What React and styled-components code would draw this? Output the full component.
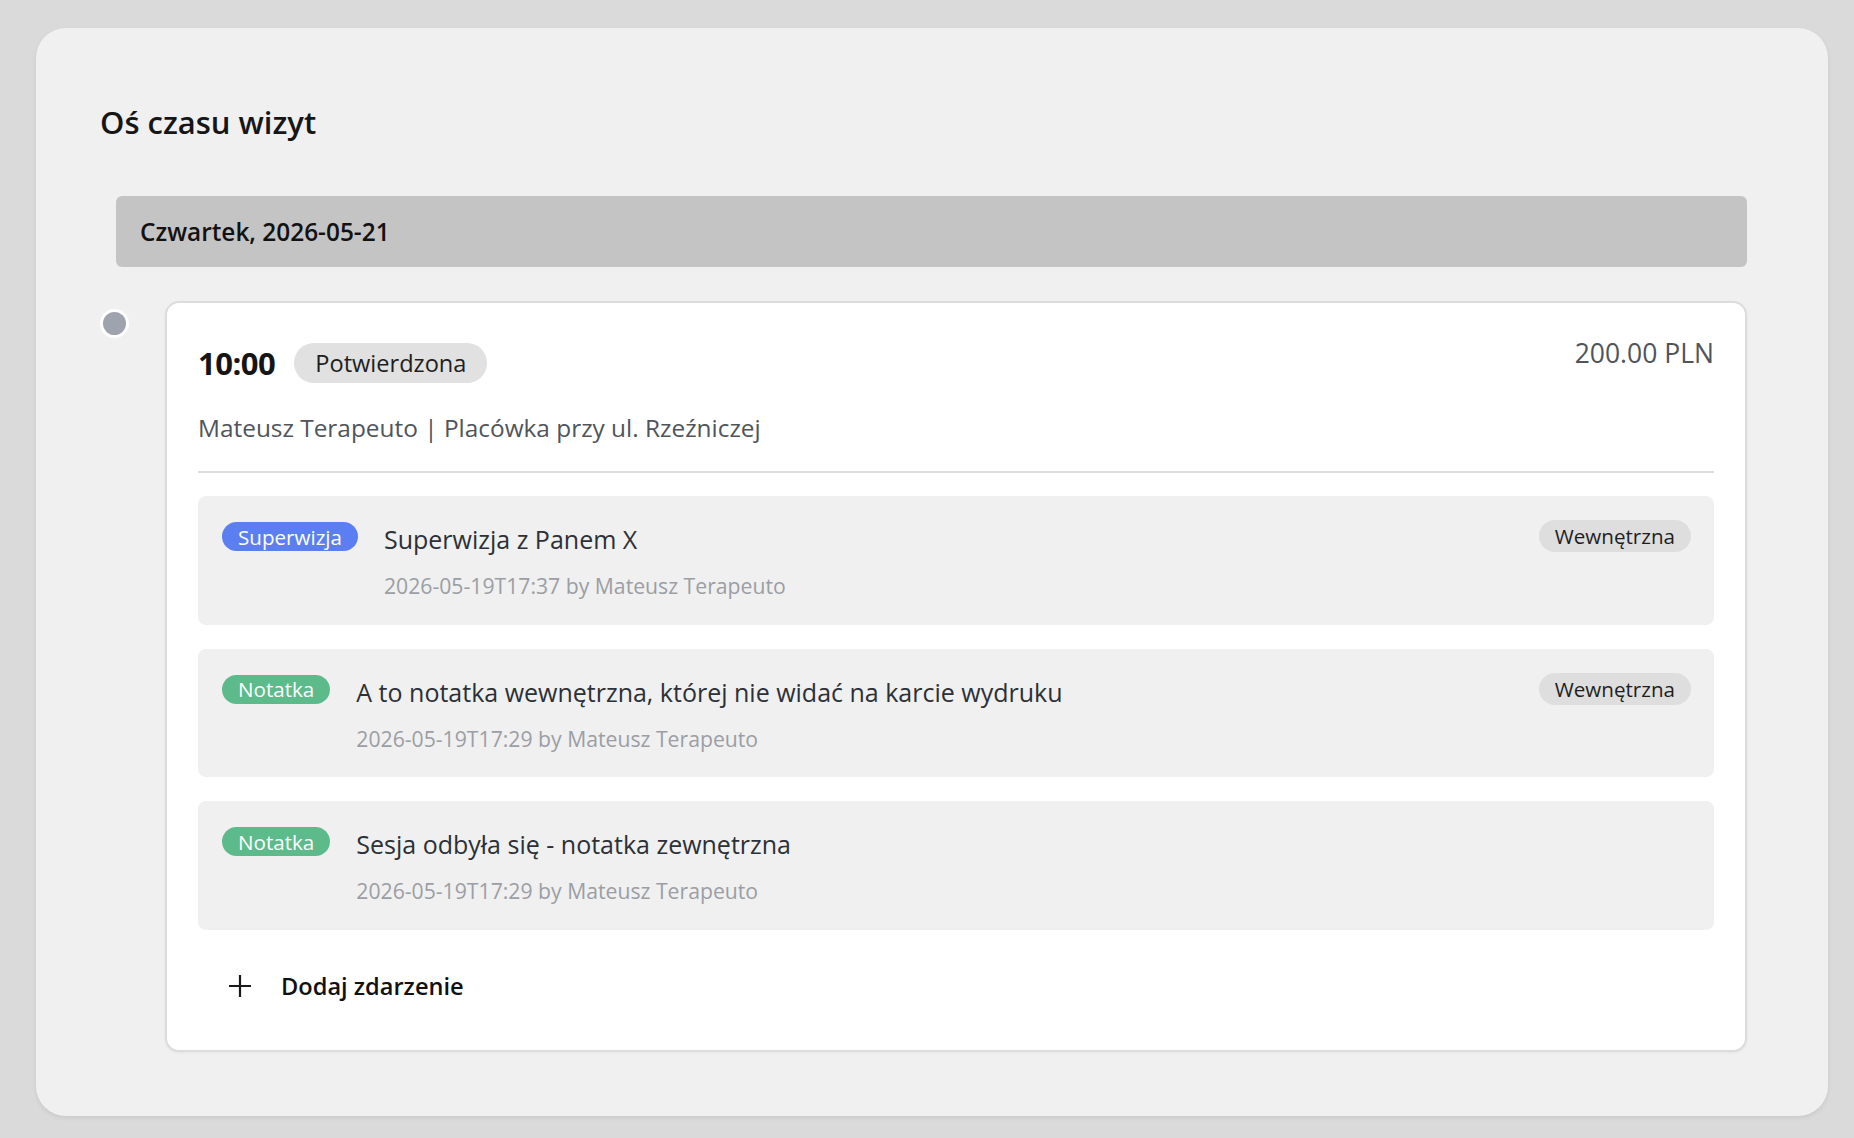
import React from 'react';
import styled, { createGlobalStyle } from 'styled-components';

const GlobalStyle = createGlobalStyle`
  html, body {
    margin: 0;
    padding: 0;
    background: #dadada;
    font-family: 'Open Sans', 'Noto Sans', sans-serif;
    color: #1c1c1c;
  }
  * { box-sizing: border-box; }
`;

const Page = styled.div`
  min-height: 100vh;
  padding: 28px 26px 25px 36px;
`;

const Panel = styled.section`
  background: #f0f0f0;
  border-radius: 30px;
  box-shadow: 0 2px 4px rgba(0, 0, 0, 0.08);
  padding: 73px 81px 64px 64px;
`;

const Heading = styled.h2`
  margin: 0;
  font-size: 31px;
  font-weight: 600;
  line-height: normal;
  color: #161616;
`;

const DayBar = styled.div`
  margin: 53px 0 34px 16px;
  height: 71px;
  display: flex;
  align-items: center;
  padding: 0 24px;
  background: #c4c4c4;
  border-radius: 6px;
  font-size: 24.4px;
  font-weight: 600;
  color: #121212;
`;

const Entry = styled.div`
  display: grid;
  grid-template-columns: 65px 1fr;
  align-items: start;
`;

const Dot = styled.span`
  width: 29px;
  height: 29px;
  margin-top: 8px;
  border-radius: 50%;
  background: #9ea3ad;
  border: 3px solid #ffffff;
`;

const VisitCard = styled.div`
  background: #ffffff;
  border: 2px solid #dcdcdc;
  border-radius: 14px;
  box-shadow: 0 1px 3px rgba(0, 0, 0, 0.05);
  padding: 32px 31px 32px 31px;
`;

const VisitHeader = styled.div`
  display: flex;
  justify-content: space-between;
  align-items: flex-start;
`;

const TimeGroup = styled.div`
  display: flex;
  align-items: center;
  gap: 19px;
  padding-top: 7px;
`;

const Time = styled.span`
  font-size: 31px;
  font-weight: 700;
  line-height: normal;
  letter-spacing: -0.5px;
  color: #151515;
`;

const StatusPill = styled.span`
  height: 40px;
  display: inline-flex;
  align-items: center;
  padding: 0 21px;
  border-radius: 20px;
  background: #e1e1e1;
  font-size: 23.6px;
  color: #1e1e1e;
`;

const Price = styled.span`
  font-size: 26.5px;
  line-height: normal;
  color: #50545b;
`;

const Place = styled.div`
  margin-top: 27px;
  font-size: 24.4px;
  line-height: normal;
  color: #50545b;
`;

const Divider = styled.hr`
  margin: 27px 0 23px;
  border: none;
  border-top: 2px solid #dedede;
`;

const EventList = styled.div`
  display: flex;
  flex-direction: column;
  gap: 24px;
`;

const EventItem = styled.div`
  display: flex;
  align-items: flex-start;
  gap: 26px;
  padding: 26px 23px 24.5px 24px;
  background: #f0f0f0;
  border-radius: 8px;
`;

const badgeColors = {
  supervision: '#5b7ff1',
  note: '#5cba8b',
};

const TypeBadge = styled.span`
  flex-shrink: 0;
  height: 29px;
  display: inline-flex;
  align-items: center;
  padding: 0 16px;
  border-radius: 15px;
  background: ${(p) => badgeColors[p.$kind]};
  color: #ffffff;
  font-size: 20.6px;
`;

const EventBody = styled.div`
  flex: 1;
  display: flex;
  flex-direction: column;
  gap: 15px;
`;

const EventTitle = styled.span`
  font-size: 25px;
  line-height: normal;
  color: #2c3037;
`;

const EventMeta = styled.span`
  font-size: 21.2px;
  line-height: normal;
  color: #9b9ea4;
`;

const ScopePill = styled.span`
  flex-shrink: 0;
  height: 32px;
  margin-top: -2px;
  display: inline-flex;
  align-items: center;
  padding: 0 16px;
  border-radius: 16px;
  background: #dedede;
  font-size: 20.6px;
  color: #1e1e1e;
`;

const AddButton = styled.button`
  margin-top: 24px;
  display: flex;
  align-items: center;
  gap: 29px;
  padding: 16px 30px;
  background: none;
  border: none;
  font-family: inherit;
  font-size: 23.6px;
  font-weight: 600;
  line-height: normal;
  color: #111111;
  cursor: pointer;
`;

const PlusIcon = () => (
  <svg width="24" height="24" viewBox="0 0 24 24" fill="none">
    <path d="M12 1v22M1 12h22" stroke="#1a1a1a" strokeWidth="2.2" />
  </svg>
);

const events = [
  {
    id: 1,
    kind: 'supervision',
    label: 'Superwizja',
    title: 'Superwizja z Panem X',
    meta: '2026-05-19T17:37 by Mateusz Terapeuto',
    internal: true,
  },
  {
    id: 2,
    kind: 'note',
    label: 'Notatka',
    title: 'A to notatka wewnętrzna, której nie widać na karcie wydruku',
    meta: '2026-05-19T17:29 by Mateusz Terapeuto',
    internal: true,
  },
  {
    id: 3,
    kind: 'note',
    label: 'Notatka',
    title: 'Sesja odbyła się - notatka zewnętrzna',
    meta: '2026-05-19T17:29 by Mateusz Terapeuto',
    internal: false,
  },
];

const App = () => (
  <Page>
    <GlobalStyle />
    <Panel>
      <Heading>Oś czasu wizyt</Heading>
      <DayBar>Czwartek, 2026-05-21</DayBar>
      <Entry>
        <Dot />
        <VisitCard>
          <VisitHeader>
            <TimeGroup>
              <Time>10:00</Time>
              <StatusPill>Potwierdzona</StatusPill>
            </TimeGroup>
            <Price>200.00 PLN</Price>
          </VisitHeader>
          <Place>Mateusz Terapeuto | Placówka przy ul. Rzeźniczej</Place>
          <Divider />
          <EventList>
            {events.map((ev) => (
              <EventItem key={ev.id}>
                <TypeBadge $kind={ev.kind}>{ev.label}</TypeBadge>
                <EventBody>
                  <EventTitle>{ev.title}</EventTitle>
                  <EventMeta>{ev.meta}</EventMeta>
                </EventBody>
                {ev.internal && <ScopePill>Wewnętrzna</ScopePill>}
              </EventItem>
            ))}
          </EventList>
          <AddButton>
            <PlusIcon />
            Dodaj zdarzenie
          </AddButton>
        </VisitCard>
      </Entry>
    </Panel>
  </Page>
);

export default App;
